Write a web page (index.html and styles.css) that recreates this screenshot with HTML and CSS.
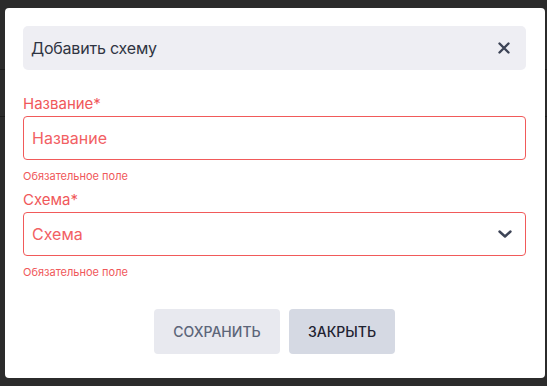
FILE: index.html
```html
<!DOCTYPE html>
<html lang="ru">
<head>
<meta charset="utf-8">
<link rel="stylesheet" href="styles.css">
</head>
<body>
<div class="backdrop">
  <div class="bg-row bg-row-1"></div>
  <div class="bg-row bg-row-2"></div>
</div>
<div class="modal">
  <div class="modal-header">
    <span class="modal-title">Добавить схему</span>
    <svg class="close-icon" width="12" height="12" viewBox="0 0 12 12"><path d="M1.5 1.5 L10.5 10.5 M10.5 1.5 L1.5 10.5" stroke="#3d4456" stroke-width="2.4" stroke-linecap="round"/></svg>
  </div>
  <div class="field">
    <label class="field-label">Название*</label>
    <div class="input"><span class="placeholder">Название</span></div>
    <div class="field-error">Обязательное поле</div>
  </div>
  <div class="field">
    <label class="field-label">Схема*</label>
    <div class="input select"><span class="placeholder">Схема</span>
      <svg class="chevron" width="14" height="8" viewBox="0 0 14 8"><path d="M1.5 1.5 L7 6.5 L12.5 1.5" fill="none" stroke="#3d4456" stroke-width="2.4" stroke-linecap="round" stroke-linejoin="round"/></svg>
    </div>
    <div class="field-error">Обязательное поле</div>
  </div>
  <div class="actions">
    <button class="btn btn-save">СОХРАНИТЬ</button>
    <button class="btn btn-close">ЗАКРЫТЬ</button>
  </div>
</div>
</body>
</html>
```
FILE: styles.css
```css
html, body {
  margin: 0;
  padding: 0;
}
body {
  width: 547px;
  height: 386px;
  background: #2b2b2b;
  font-family: Inter, "Open Sans", sans-serif;
  position: relative;
  overflow: hidden;
}
.backdrop {
  height: 386px;
}
.bg-row {
  height: 46px;
  border-bottom: 1px solid #1c1c1c;
}
.bg-row-1 {
  height: 69px;
}
.modal {
  position: absolute;
  left: 5px;
  top: 8px;
  width: 540px;
  height: 370px;
  box-sizing: border-box;
  background: #fff;
  border-radius: 4px;
  padding: 18px 19px 0 18px;
}
.modal-header {
  height: 44px;
  background: #eeeef3;
  border-radius: 5px;
  display: flex;
  align-items: center;
  justify-content: space-between;
  padding: 0 16px 0 8px;
  box-sizing: border-box;
}
.modal-title {
  font-size: 16px;
  color: #2f3442;
  letter-spacing: -0.2px;
}
.close-icon {
  display: block;
}
.field {
  display: flex;
  flex-direction: column;
}
.field-label {
  font-size: 15px;
  color: #f0585a;
  line-height: 18px;
  margin-top: 25px;
  margin-bottom: 3px;
}
.field + .field .field-label {
  margin-top: 8px;
}
.input {
  height: 44px;
  box-sizing: border-box;
  border: 1px solid #f15a5a;
  border-radius: 4px;
  display: flex;
  align-items: center;
  justify-content: space-between;
  padding: 0 13px 0 8px;
}
.placeholder {
  font-size: 16px;
  color: #f26063;
}
.chevron {
  display: block;
}
.field-error {
  font-size: 11px;
  color: #f0585a;
  line-height: 14px;
  margin-top: 9px;
}
.actions {
  display: flex;
  justify-content: center;
  gap: 9px;
  margin-top: 30px;
}
.btn {
  height: 45px;
  border: none;
  border-radius: 4px;
  font-family: Inter, "Open Sans", sans-serif;
  font-size: 14px;
  font-weight: 500;
  padding: 0;
}
.btn-save {
  width: 126px;
  background: #e8e9ef;
  color: #5c6579;
}
.btn-close {
  width: 106px;
  background: #d5d9e3;
  color: #1e2230;
}
```
